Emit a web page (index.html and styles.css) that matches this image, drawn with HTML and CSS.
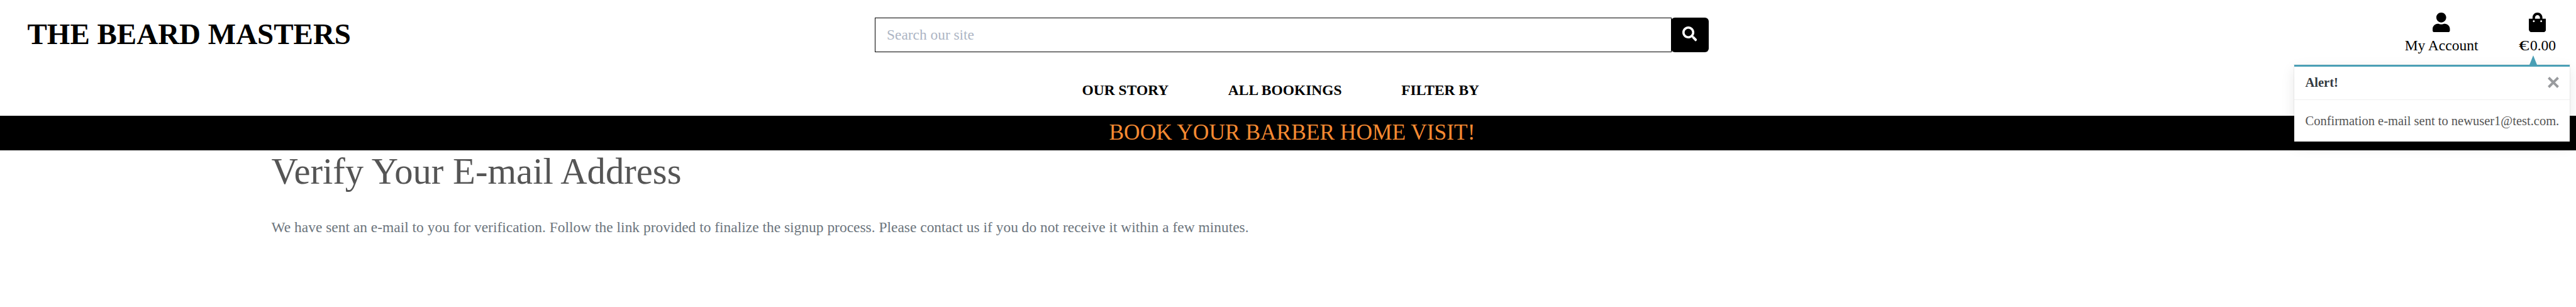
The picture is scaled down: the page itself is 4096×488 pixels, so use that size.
FILE: index.html
```html
<!DOCTYPE html>
<html lang="en">
<head>
<meta charset="utf-8">
<title>The Beard Masters</title>
<link rel="stylesheet" href="styles.css">
</head>
<body>
<header class="site-header">
  <div class="top-row">
    <a class="logo">THE BEARD MASTERS</a>
    <form class="search">
      <div class="search-field">Search our site</div>
      <button class="search-button" type="button" aria-label="Search">
        <svg viewBox="0 0 512 512"><path d="M505 442.7L405.300 343c-4.500-4.500-10.600-7-17-7H372c27.600-35.300 44-79.700 44-128C416 93.100 322.900 0 208 0S0 93.100 0 208s93.100 208 208 208c48.300 0 92.700-16.400 128-44v16.300c0 6.400 2.500 12.500 7 17l99.700 99.700c9.400 9.400 24.600 9.400 33.900 0l28.300-28.300c9.400-9.400 9.400-24.600.1-34zM208 336c-70.700 0-128-57.200-128-128 0-70.700 57.200-128 128-128 70.700 0 128 57.200 128 128 0 70.700-57.200 128-128 128z"/></svg>
      </button>
    </form>
    <div class="links">
      <a class="link">
        <svg viewBox="0 0 448 512"><path d="M224 256c70.700 0 128-57.300 128-128S294.700 0 224 0 96 57.300 96 128s57.300 128 128 128zm89.600 32h-16.700c-22.200 10.200-46.900 16-72.900 16s-50.600-5.800-72.900-16h-16.700C60.200 288 0 348.200 0 422.400V464c0 26.500 21.500 48 48 48h352c26.500 0 48-21.500 48-48v-41.600c0-74.200-60.200-134.400-134.400-134.400z"/></svg>
        <span>My Account</span>
      </a>
      <a class="link">
        <svg viewBox="0 0 448 512"><path d="M352 160v-32C352 57.420 294.579 0 224 0 153.420 0 96 57.420 96 128v32H0v272c0 44.183 35.817 80 80 80h288c44.183 0 80-35.817 80-80V160h-96zm-192-32c0-35.290 28.710-64 64-64s64 28.710 64 64v32H160v-32zm160 120c-13.255 0-24-10.745-24-24s10.745-24 24-24 24 10.745 24 24-10.745 24-24 24zm-192 0c-13.255 0-24-10.745-24-24s10.745-24 24-24 24 10.745 24 24-10.745 24-24 24z"/></svg>
        <span><span class="euro">€</span>0.00</span>
      </a>
    </div>
  </div>
  <nav class="nav"><a>OUR STORY</a><a>ALL BOOKINGS</a><a>FILTER BY</a></nav>
</header>
<div class="banner">BOOK YOUR BARBER HOME VISIT!</div>
<main class="content">
  <h1 class="title">Verify Your E-mail Address</h1>
  <p class="text">We have sent an e-mail to you for verification. Follow the link provided to finalize the signup process. Please contact us if you do not receive it within a few minutes.</p>
</main>
<aside class="toast">
  <div class="toast-arrow"></div>
  <div class="toast-head"><strong>Alert!</strong>
    <svg class="close" viewBox="0 0 18 18"><path d="M1.500 1.500L16.500 16.500M16.500 1.500L1.500 16.500"/></svg>
  </div>
  <div class="toast-body">Confirmation e-mail sent to newuser1@test.com.</div>
</aside>
</body>
</html>
```
FILE: styles.css
```css
* { box-sizing: border-box; }
body {
  margin: 0;
  background: #fff;
  font-family: "Liberation Serif", "Times New Roman", serif;
  color: #000;
  height: 488px;
  overflow: hidden;
  position: relative;
}
.site-header { height: 184px; display: flex; flex-direction: column; }
.top-row {
  height: 109px;
  display: grid;
  grid-template-columns: 1391px 1326px 1fr;
}
.logo {
  padding-left: 43.5px;
  font-size: 47px;
  font-weight: bold;
  line-height: 108px;
  white-space: nowrap;
}
.search { display: flex; margin: 28px 0 0; height: 55px; }
.search-field {
  flex: 1;
  border: 1px solid #000;
  padding-left: 18px;
  font-size: 23.4px;
  line-height: 53px;
  color: #adb5c4;
}
.search-button {
  width: 60px;
  margin-left: -1px;
  padding: 0 0 3px;
  border: 0;
  border-radius: 6px;
  background: #000;
  display: flex;
  align-items: center;
  justify-content: center;
}
.search-button svg { width: 23.5px; height: 23.5px; fill: #fff; margin-right: 1px; }
.links { display: flex; justify-content: flex-end; padding: 20px 32px 0 0; gap: 65px; }
.link { display: flex; flex-direction: column; align-items: center; font-size: 23.5px; line-height: 28px; white-space: nowrap; }
.link svg { width: 27.5px; height: 31.4px; margin-bottom: 7px; }
.euro { display: inline-block; transform: scaleX(1.4); transform-origin: 0 50%; width: 17.4px; }
.nav {
  display: flex;
  gap: 94.5px;
  padding-left: 1720.5px;
  font-size: 23.5px;
  font-weight: bold;
  line-height: 68px;
}
.banner {
  height: 55px;
  padding-left: 13px;
  background: #000;
  color: #f68a32;
  font-size: 35.4px;
  line-height: 53px;
  text-align: center;
}
.content { padding-left: 431.5px; }
.title { margin: 0; padding-top: 1px; font-size: 58.7px; font-weight: normal; line-height: 65px; color: #555; }
.text { margin: 41px 0 0; font-size: 23.46px; line-height: 30px; color: #6c757d; }
.toast {
  position: absolute;
  left: 3648px;
  top: 103px;
  width: 438px;
  height: 122px;
  background: #fff;
  border-top: 3px solid #4a9fb5;
  box-shadow: 0 0 0 1px rgba(0, 0, 0, .05), 0 6.5px 20px rgba(0, 0, 0, .1);
}
.toast-arrow {
  position: absolute;
  left: 374px;
  top: -18px;
  border: solid transparent;
  border-width: 0 6px 15px;
  border-bottom-color: #4a9fb5;
}
.toast-head {
  height: 53px;
  padding: 0 17px 1px 17.5px;
  border-bottom: 1px solid #f0f0f0;
  display: flex;
  align-items: center;
  justify-content: space-between;
  font-size: 20.5px;
  color: #343a40;
}
.close { width: 18px; height: 18px; margin-bottom: 2px; stroke: #999b9e; stroke-width: 4; }
.toast-body { padding-left: 17.5px; font-size: 20.5px; line-height: 66px; color: #555; white-space: nowrap; }
```
